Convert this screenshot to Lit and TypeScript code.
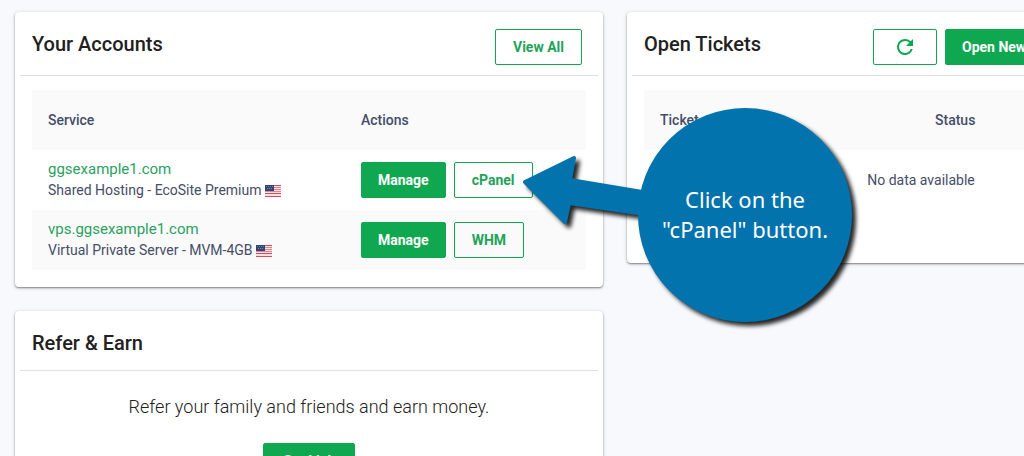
import { LitElement, html, svg, css } from "lit";
import { customElement, property } from "lit/decorators.js";

interface Account {
  domain: string;
  plan: string;
  panel: string;
}

const accounts: Account[] = [
  { domain: "ggsexample1.com", plan: "Shared Hosting - EcoSite Premium", panel: "cPanel" },
  { domain: "vps.ggsexample1.com", plan: "Virtual Private Server - MVM-4GB", panel: "WHM" },
];

const buttonStyles = css`
  .btn {
    box-sizing: border-box;
    height: 36px;
    padding: 0 17px;
    border: 1px solid #0fa850;
    border-radius: 2px;
    background: transparent;
    color: #1fa35a;
    font: 700 14px/20px Roboto, sans-serif;
    white-space: nowrap;
    cursor: pointer;
  }
  .btn.solid {
    padding: 0 16px;
    background: #0fa850;
    color: #fff;
  }
  .btn.wide {
    min-width: 249px;
    text-align: left;
  }
  .btn.link {
    min-width: 92px;
  }
  .btn.icon {
    width: 64px;
    display: inline-flex;
    align-items: center;
    justify-content: center;
  }
`;

const tableStyles = css`
  table {
    width: 100%;
    border-collapse: collapse;
    table-layout: fixed;
    font-size: 14px;
    line-height: 21px;
    color: #454d68;
  }
  th,
  td {
    height: 60px;
    box-sizing: border-box;
    padding: 0 16px;
    text-align: left;
    vertical-align: middle;
  }
  th {
    font-weight: 500;
  }
  thead tr,
  tbody tr:nth-child(even) {
    background: #fafafa;
  }
`;

@customElement("flag-us")
export class FlagUs extends LitElement {
  static styles = css`
    :host {
      display: inline-block;
      width: 16px;
      height: 12px;
      vertical-align: -2px;
    }
    svg {
      display: block;
    }
  `;

  render() {
    return html`<svg width="16" height="12" viewBox="0 0 16 12" role="img" aria-label="United States">
      <rect width="16" height="12" fill="#f6dfe1" />
      ${[0, 2, 4, 6, 8, 11].map(
        (y) => svg`<rect y=${y} width="16" height="1" fill=${y > 7 || y === 0 ? "#cf4f5c" : "#dd8890"} />`
      )}
      <rect width="9" height="6" fill="#2f4574" />
      ${[1, 3, 5, 7].map((x) => svg`<rect x=${x} y="1" width="1" height="1" fill="#6d7da0" />`)}
      ${[2, 4, 6].map((x) => svg`<rect x=${x} y="3" width="1" height="1" fill="#7f8dab" />`)}
    </svg>`;
  }
}

@customElement("panel-card")
export class PanelCard extends LitElement {
  @property() heading = "";

  static styles = css`
    :host {
      display: block;
      background: #fff;
      border-radius: 4px;
      box-shadow: 0 1px 2px rgba(0, 0, 0, 0.45), 0 1px 5px rgba(0, 0, 0, 0.1);
    }
    header {
      display: flex;
      align-items: flex-start;
      justify-content: space-between;
      margin: 0 5px;
      padding: 17px 16px 10px 12px;
      border-bottom: 1px solid #dfdfdf;
    }
    h2 {
      margin: 0 0 2px;
      font: 500 20px/30px Roboto, sans-serif;
      color: #212121;
    }
    .actions {
      display: flex;
      gap: 8px;
    }
    .body {
      padding: 14px 17px 17px;
    }
  `;

  render() {
    return html`
      <header>
        <h2>${this.heading}</h2>
        <div class="actions"><slot name="actions"></slot></div>
      </header>
      <div class="body"><slot></slot></div>
    `;
  }
}

@customElement("callout-note")
export class CalloutNote extends LitElement {
  static styles = css`
    :host {
      display: block;
      width: 350px;
      height: 236px;
      pointer-events: none;
    }
    svg {
      display: block;
      filter: drop-shadow(4px 4px 2px rgba(0, 0, 0, 0.85));
    }
    p {
      position: absolute;
      top: 82px;
      left: 120px;
      width: 214px;
      margin: 0;
      text-align: center;
      color: #fff;
      font: 400 22px/30px "Noto Sans", "Open Sans", sans-serif;
    }
  `;

  render() {
    return html`
      <svg width="350" height="236" viewBox="0 0 350 236" aria-hidden="true">
        <g fill="#0273ad" stroke="#0273ad" stroke-width="4" stroke-linejoin="round">
          <path d="M7 80 56 56 52 78 130 91 126 112 51 101 47 120Z" />
          <circle cx="227" cy="113" r="105" />
        </g>
      </svg>
      <p>Click on the<br />"cPanel" button.</p>
    `;
  }
}

@customElement("app-root")
export class AppRoot extends LitElement {
  static styles = [
    buttonStyles,
    tableStyles,
    css`
      :host {
        display: block;
        position: relative;
        box-sizing: border-box;
        height: 100vh;
        overflow: hidden;
        padding: 12px 15px;
        background: #f8f9fd;
        font-family: Roboto, sans-serif;
      }
      main {
        display: grid;
        grid-template-columns: repeat(2, minmax(588px, 1fr));
        gap: 24px;
        align-items: start;
      }
      .column {
        display: grid;
        gap: 24px;
      }
      .service {
        width: 313px;
      }
      .number {
        width: 275px;
      }
      .domain {
        display: block;
        font-size: 15px;
        color: #2ba160;
        text-decoration: none;
      }
      .row {
        display: flex;
        gap: 8px;
      }
      .tickets {
        min-height: 156px;
      }
      .empty {
        text-align: center;
      }
      .refer {
        display: flex;
        flex-direction: column;
        align-items: center;
        gap: 22px;
        padding-top: 8px;
      }
      .refer p {
        margin: 0;
        font-size: 18px;
        font-weight: 300;
        line-height: 28px;
        color: #212121;
      }
      .callout {
        position: absolute;
        top: 102px;
        left: 518px;
      }
    `,
  ];

  render() {
    return html`
      <main>
        <div class="column">
          <panel-card heading="Your Accounts">
            <button class="btn" slot="actions">View All</button>
            <table>
              <thead>
                <tr>
                  <th class="service">Service</th>
                  <th>Actions</th>
                </tr>
              </thead>
              <tbody>
                ${accounts.map(
                  (a) => html`<tr>
                    <td>
                      <a class="domain" href="#">${a.domain}</a>
                      ${a.plan} <flag-us></flag-us>
                    </td>
                    <td>
                      <div class="row">
                        <button class="btn solid">Manage</button>
                        <button class="btn">${a.panel}</button>
                      </div>
                    </td>
                  </tr>`
                )}
              </tbody>
            </table>
          </panel-card>
          <panel-card heading="Refer &amp; Earn">
            <div class="refer">
              <p>Refer your family and friends and earn money.</p>
              <button class="btn solid link">Get Link</button>
            </div>
          </panel-card>
        </div>
        <panel-card heading="Open Tickets">
          <button class="btn icon" slot="actions" aria-label="Refresh">
            <svg width="24" height="24" viewBox="0 0 24 24" fill="#0fa850" aria-hidden="true">
              <path
                d="M17.65 6.35A7.958 7.958 0 0 0 12 4a8 8 0 1 0 7.73 10h-2.08A6 6 0 1 1 12 6c1.66 0 3.14.69 4.22 1.78L13 11h7V4z"
              />
            </svg>
          </button>
          <button class="btn solid wide" slot="actions">Open New Ticket</button>
          <div class="tickets">
            <table>
              <thead>
                <tr>
                  <th class="number">Ticket</th>
                  <th>Status</th>
                </tr>
              </thead>
              <tbody>
                <tr>
                  <td class="empty" colspan="2">No data available</td>
                </tr>
              </tbody>
            </table>
          </div>
        </panel-card>
      </main>
      <callout-note class="callout"></callout-note>
    `;
  }
}
